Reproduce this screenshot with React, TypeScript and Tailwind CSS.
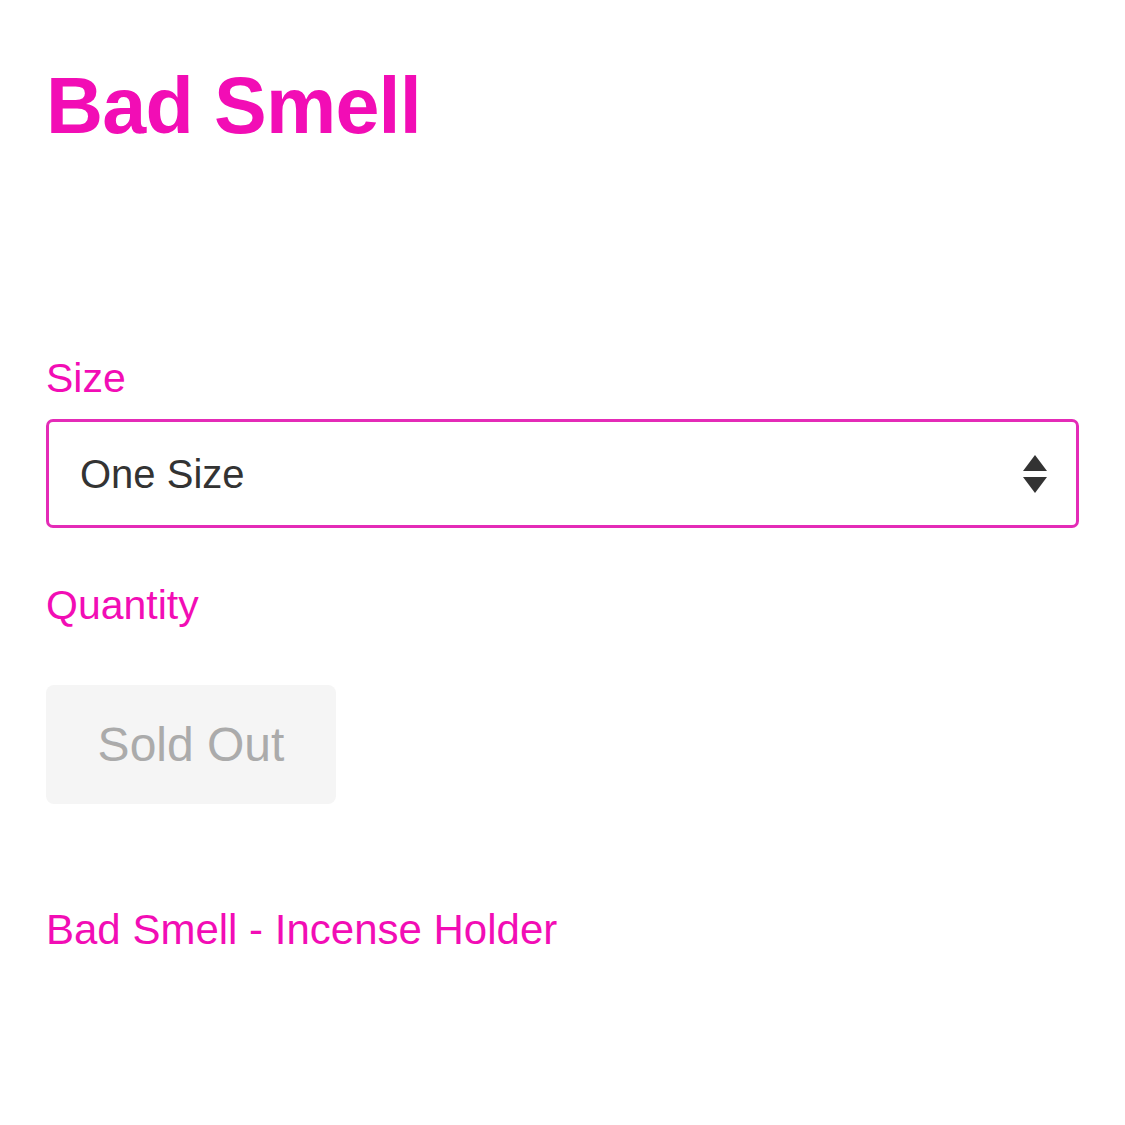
import React from 'react';

const PINK = 'text-[#f20db5]';

// Stacked up/down caret shown at the right of the select
const SelectArrows = () => (
  <svg width="26" height="38" viewBox="0 0 26 38" className="shrink-0">
    <path d="M13 0 L25 16 L1 16 Z" fill="#333333" />
    <path d="M1 22 L25 22 L13 38 Z" fill="#333333" />
  </svg>
);

export default function App() {
  return (
    <div
      className="w-[1125px] h-[1125px] bg-white px-[46px] flex flex-col"
      style={{ fontFamily: '"Liberation Sans", Arial, Helvetica, sans-serif' }}
    >
      <h1 className={`mt-[66px] h-[80px] text-[79px] leading-none font-bold tracking-[-0.01em] ${PINK}`}>
        Bad Smell
      </h1>

      <label className={`mt-[212px] h-[41px] text-[41px] leading-none ${PINK}`}>Size</label>

      <div className="mt-[20px] h-[109px] rounded-[7px] border-[3px] border-[#e42bb7] flex items-center justify-between pl-[31px] pr-[28px]">
        <span className="text-[40px] leading-none text-[#333333]">One Size</span>
        <SelectArrows />
      </div>

      <label className={`mt-[57px] h-[41px] text-[41px] leading-none ${PINK}`}>Quantity</label>

      <button
        disabled
        className="mt-[59px] w-[290px] h-[119px] rounded-[8px] bg-[#f5f5f5] text-[48px] leading-none text-[#ababab] flex items-center justify-center"
      >
        Sold Out
      </button>

      <p className={`mt-[105px] text-[42px] leading-none ${PINK}`}>Bad Smell - Incense Holder</p>
    </div>
  );
}
